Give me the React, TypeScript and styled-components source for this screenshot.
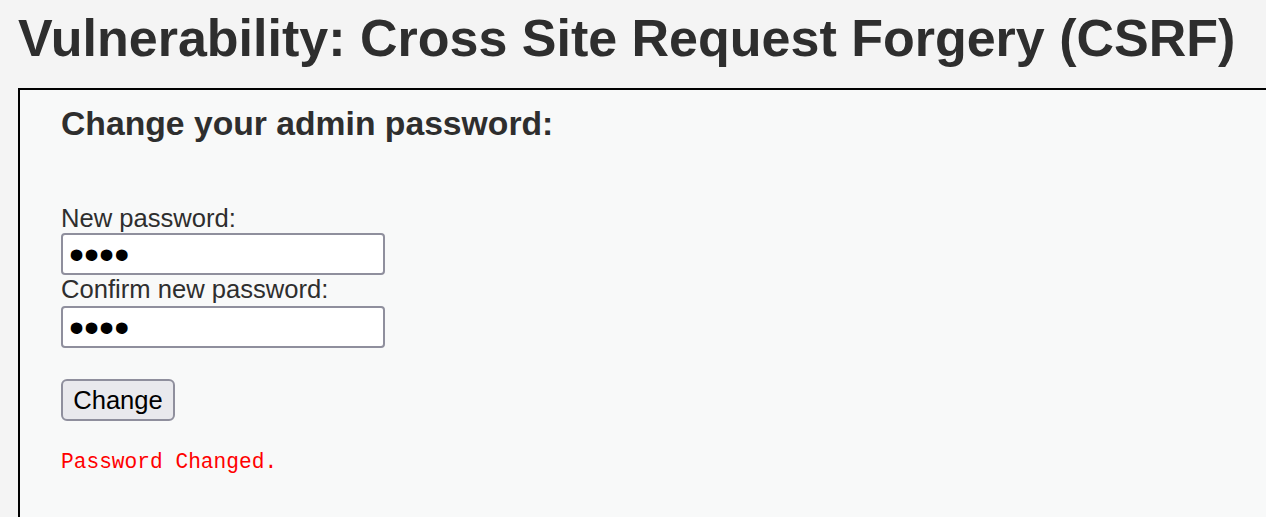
import React from "react";
import styled, { createGlobalStyle } from "styled-components";

const GlobalStyle = createGlobalStyle`
  html, body {
    margin: 0;
    padding: 0;
    background: #f4f4f4;
    overflow: hidden;
  }
  body {
    font-family: "Liberation Sans", Arial, sans-serif;
    color: #2e2e2e;
  }
`;

const Page = styled.main`
  display: flex;
  flex-direction: column;
  padding-left: 18px;
  width: 1400px;
`;

const Title = styled.h1`
  margin: 8px 0 0 0;
  font-size: 52px;
  font-weight: bold;
  line-height: normal;
  color: #2e2e2e;
  white-space: nowrap;
`;

const CodeArea = styled.section`
  margin-top: 20px;
  border: 2px solid #000;
  background: #f8f9f9;
  padding: 0 0 40px 41px;
  height: 460px;
  box-sizing: border-box;
`;

const Heading = styled.h3`
  margin: 14px 0 0 0;
  font-size: 33.7px;
  font-weight: bold;
  line-height: normal;
  color: #2e2e2e;
`;

const Form = styled.form`
  display: flex;
  flex-direction: column;
  align-items: flex-start;
  margin-top: 61px;
`;

const Label = styled.label`
  font-size: 25.6px;
  line-height: normal;
  color: #2e2e2e;
`;

const PasswordInput = styled.input<{ $gap?: number }>`
  box-sizing: border-box;
  width: 324px;
  height: 42px;
  margin: ${(p) => p.$gap ?? 0}px 0 0 0;
  padding: 0 0 0 6px;
  border: 2px solid #8f8f9d;
  border-radius: 4px;
  background: #fff;
  font-family: "Liberation Sans", Arial, sans-serif;
  font-size: 43px;
  line-height: 36px;
  color: #000;
  outline: none;
`;

const Button = styled.button`
  box-sizing: border-box;
  margin-top: 31px;
  width: 114px;
  height: 42px;
  padding: 0;
  border: 2px solid #8f8f9d;
  border-radius: 6px;
  background: #e9e9ed;
  font-family: "Liberation Sans", Arial, sans-serif;
  font-size: 25.6px;
  color: #000;
`;

const Message = styled.pre`
  margin: 29px 0 0 0;
  font-family: "Liberation Mono", "Courier New", monospace;
  font-size: 21.2px;
  line-height: normal;
  color: #ff0000;
`;

export default function App() {
  return (
    <>
      <GlobalStyle />
      <Page>
        <Title>Vulnerability: Cross Site Request Forgery (CSRF)</Title>
        <CodeArea>
          <Heading>Change your admin password:</Heading>
          <Form onSubmit={(e) => e.preventDefault()}>
            <Label htmlFor="pw-new">New password:</Label>
            <PasswordInput id="pw-new" type="password" defaultValue="1234" autoComplete="off" />
            <Label htmlFor="pw-conf">Confirm new password:</Label>
            <PasswordInput id="pw-conf" type="password" defaultValue="1234" autoComplete="off" $gap={2} />
            <Button type="submit">Change</Button>
          </Form>
          <Message>Password Changed.</Message>
        </CodeArea>
      </Page>
    </>
  );
}
